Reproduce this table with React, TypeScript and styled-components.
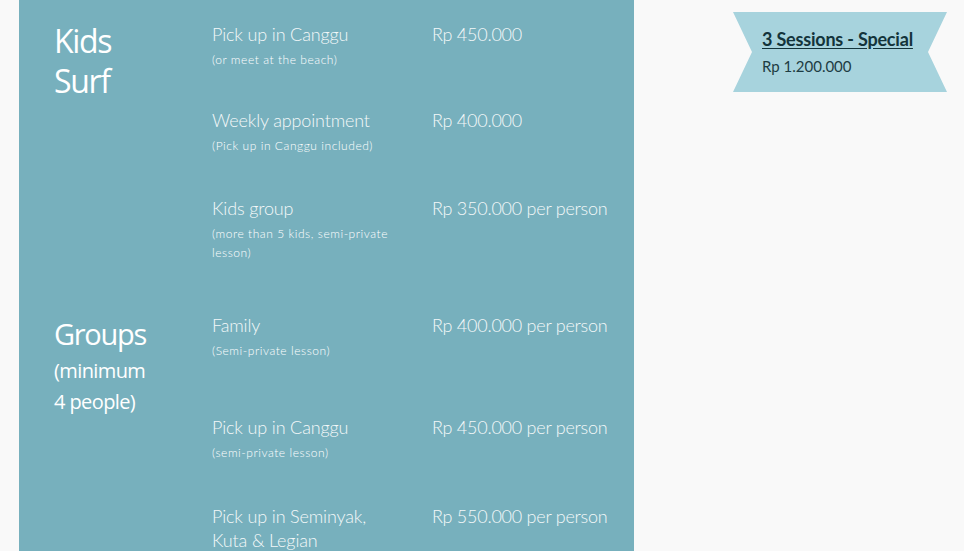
import React from "react";
import styled, { createGlobalStyle } from "styled-components";

const Global = createGlobalStyle`
  html, body { margin: 0; padding: 0; background: #f9f9f9; overflow: hidden; }
  body { font-family: "Lato", "Liberation Sans", sans-serif; }
`;

const Page = styled.div`
  display: flex;
  align-items: stretch;
  padding-left: 19px;
  height: 551px;
  overflow: hidden;
`;

const Panel = styled.main`
  width: 615px;
  flex: none;
  height: 100%;
  overflow: hidden;
  background: #77b0bd;
  padding: 22px 0 0 35px;
  box-sizing: border-box;
  display: flex;
  flex-direction: column;
`;

const Section = styled.section<{ $gap?: number }>`
  display: flex;
  flex: none;
  margin-bottom: ${(p) => p.$gap ?? 0}px;
`;

const Heading = styled.h2<{ $size: number; $offset: number }>`
  width: 158px;
  flex: none;
  margin: ${(p) => p.$offset}px 0 0 0;
  font-family: "Open Sans", "DejaVu Sans", sans-serif;
  font-weight: 500;
  font-size: ${(p) => p.$size}px;
  line-height: 40px;
  letter-spacing: -1.3px;
  color: #ffffff;
`;

const HeadingNote = styled.span`
  display: block;
  font-size: 20px;
  font-weight: 500;
  line-height: 31px;
  letter-spacing: -0.6px;
  margin-top: 1px;
`;

const Items = styled.div`
  display: flex;
  flex-direction: column;
  flex: 1;
`;

const Item = styled.div<{ $gap: number }>`
  display: grid;
  grid-template-columns: 220px 1fr;
  margin-bottom: ${(p) => p.$gap}px;
`;

const Info = styled.div`
  padding-right: 33px;
`;

const Name = styled.div`
  font-family: "Lato", "Liberation Sans", sans-serif;
  font-weight: 300;
  font-size: 18px;
  line-height: 24px;
  color: #f4f8f9;
  letter-spacing: -0.15px;
`;

const Note = styled.div`
  margin-top: 4px;
  font-family: "Lato", "Liberation Sans", sans-serif;
  font-weight: 300;
  font-size: 12px;
  line-height: 19px;
  letter-spacing: 0.55px;
  color: #ffffff;
`;

const Price = styled.div`
  font-family: "Lato", "Liberation Sans", sans-serif;
  font-weight: 300;
  font-size: 18px;
  line-height: 24px;
  color: #f4f8f9;
  letter-spacing: -0.25px;
`;

const Aside = styled.aside`
  padding: 12px 0 0 99px;
`;

const Ribbon = styled.div`
  width: 214px;
  height: 80px;
  box-sizing: border-box;
  padding: 15px 0 0 29px;
  background: #a7d3dd;
  clip-path: polygon(0 0, 100% 0, calc(100% - 19px) 50%, 100% 100%, 0 100%, 19px 50%);
`;

const RibbonTitle = styled.a`
  display: inline-block;
  font-family: "Lato", "Liberation Sans", sans-serif;
  font-weight: 700;
  font-size: 18px;
  line-height: 24px;
  letter-spacing: -0.2px;
  color: #13343b;
  text-decoration: underline;
  text-underline-offset: 2px;
`;

const RibbonPrice = styled.div`
  margin-top: 5px;
  font-family: "Lato", "Liberation Sans", sans-serif;
  font-size: 15px;
  line-height: 20px;
  color: #1d3c43;
`;

type Row = { name: string; note?: string; price: string; gap: number };

const kids: Row[] = [
  { name: "Pick up in Canggu", note: "(or meet at the beach)", price: "Rp 450.000", gap: 39 },
  { name: "Weekly appointment", note: "(Pick up in Canggu included)", price: "Rp 400.000", gap: 41 },
  { name: "Kids group", note: "(more than 5 kids, semi-private lesson)", price: "Rp 350.000 per person", gap: 0 },
];

const groups: Row[] = [
  { name: "Family", note: "(Semi-private lesson)", price: "Rp 400.000 per person", gap: 55 },
  { name: "Pick up in Canggu", note: "(semi-private lesson)", price: "Rp 450.000 per person", gap: 42 },
  { name: "Pick up in Seminyak, Kuta & Legian", price: "Rp 550.000 per person", gap: 0 },
];

const renderRows = (rows: Row[]) =>
  rows.map((r, i) => (
    <Item key={i} $gap={r.gap}>
      <Info>
        <Name>{r.name}</Name>
        {r.note && <Note>{r.note}</Note>}
      </Info>
      <Price>{r.price}</Price>
    </Item>
  ));

export default function App() {
  return (
    <>
      <Global />
      <Page>
        <Panel>
          <Section $gap={51}>
            <Heading $size={32} $offset={-1}>
              Kids
              <br />
              Surf
            </Heading>
            <Items>{renderRows(kids)}</Items>
          </Section>
          <Section>
            <Heading $size={29} $offset={1}>
              Groups
              <HeadingNote>
                (minimum
                <br />4 people)
              </HeadingNote>
            </Heading>
            <Items>{renderRows(groups)}</Items>
          </Section>
        </Panel>
        <Aside>
          <Ribbon>
            <RibbonTitle>3 Sessions - Special</RibbonTitle>
            <RibbonPrice>Rp 1.200.000</RibbonPrice>
          </Ribbon>
        </Aside>
      </Page>
    </>
  );
}
